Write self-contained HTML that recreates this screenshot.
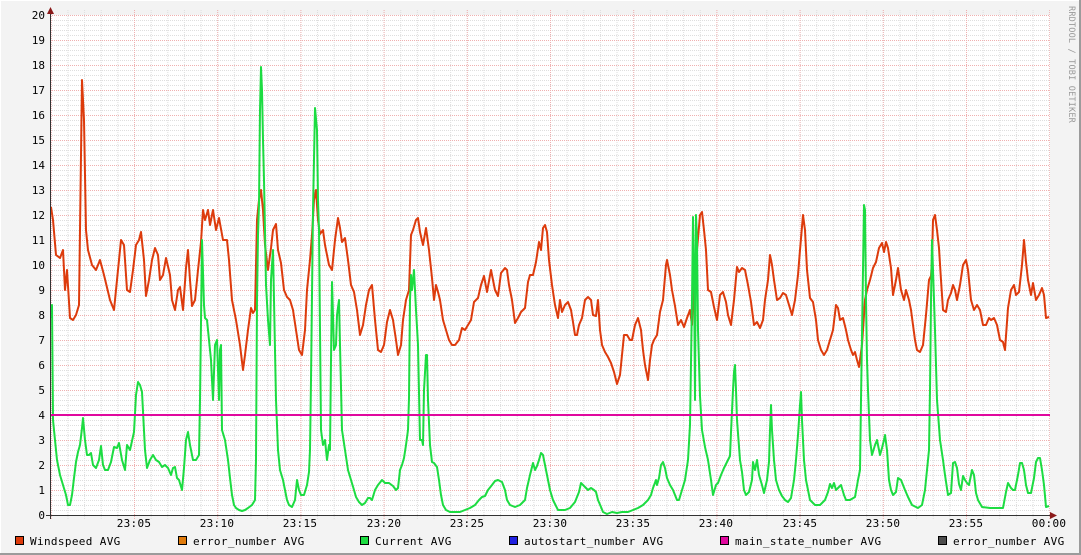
<!DOCTYPE html>
<html><head><meta charset="utf-8"><style>
html,body{margin:0;padding:0;background:#f3f3f3;}
svg{display:block;font-family:"DejaVu Sans Mono","Liberation Mono",monospace;}
</style></head><body>
<svg width="1081" height="555" viewBox="0 0 1081 555" xmlns="http://www.w3.org/2000/svg">
<defs>
<pattern id="minh" x="0" y="15" width="1000" height="5" patternUnits="userSpaceOnUse"><line x1="0" y1="0.5" x2="1000" y2="0.5" stroke="#dedede" stroke-width="1" stroke-dasharray="1,1"/></pattern>
<pattern id="minv" x="50.8" y="0" width="16.64" height="600" patternUnits="userSpaceOnUse"><line x1="0.5" y1="0" x2="0.5" y2="600" stroke="#dedede" stroke-width="1" stroke-dasharray="1,1"/></pattern>
<pattern id="majh" x="0" y="15" width="1000" height="25" patternUnits="userSpaceOnUse"><line x1="0" y1="0.5" x2="1000" y2="0.5" stroke="#efb0b0" stroke-width="1" stroke-dasharray="1,1"/></pattern>
<pattern id="majv" x="50.8" y="0" width="83.2" height="600" patternUnits="userSpaceOnUse"><line x1="0.5" y1="0" x2="0.5" y2="600" stroke="#efb0b0" stroke-width="1" stroke-dasharray="1,1"/></pattern>
</defs>
<rect x="0" y="0" width="1081" height="555" fill="#f3f3f3"/>
<line x1="0" y1="0.5" x2="1081" y2="0.5" stroke="#fff"/>
<line x1="0.5" y1="0" x2="0.5" y2="555" stroke="#fff"/>
<rect x="1079" y="0" width="2" height="555" fill="#9b9b9b"/>
<rect x="0" y="553" width="1081" height="2" fill="#9b9b9b"/>
<rect x="51" y="15" width="999" height="500" fill="#fff"/>
<rect x="51" y="15" width="999" height="500" fill="url(#minh)"/>
<rect x="51" y="10" width="999" height="509" fill="url(#minv)"/>
<rect x="51" y="15" width="999" height="500" fill="url(#majh)"/>
<rect x="51" y="10" width="999" height="509" fill="url(#majv)"/>
<g font-size="11" fill="#000" text-anchor="end">
<text x="45" y="19">20</text><text x="45" y="44">19</text><text x="45" y="69">18</text><text x="45" y="94">17</text><text x="45" y="119">16</text><text x="45" y="144">15</text><text x="45" y="169">14</text><text x="45" y="194">13</text><text x="45" y="219">12</text><text x="45" y="244">11</text><text x="45" y="269">10</text><text x="45" y="294">9</text><text x="45" y="319">8</text><text x="45" y="344">7</text><text x="45" y="369">6</text><text x="45" y="394">5</text><text x="45" y="419">4</text><text x="45" y="444">3</text><text x="45" y="469">2</text><text x="45" y="494">1</text><text x="45" y="519">0</text>
</g>
<g font-size="11" fill="#000" text-anchor="middle" letter-spacing="0.3">
<text x="134" y="527">23:05</text><text x="217" y="527">23:10</text><text x="300" y="527">23:15</text><text x="384" y="527">23:20</text><text x="467" y="527">23:25</text><text x="550" y="527">23:30</text><text x="633" y="527">23:35</text><text x="716" y="527">23:40</text><text x="800" y="527">23:45</text><text x="883" y="527">23:50</text><text x="966" y="527">23:55</text><text x="1049" y="527">00:00</text>
</g>
<polyline fill="none" stroke="#dd3b0c" stroke-width="2" stroke-linejoin="round" points="51,207 53,220 56,255 60,258 63,250 65,290 67,270 70,318 73,320 76,315 79,305 82,80 84,120 86,230 88,250 92,265 96,270 100,260 104,275 110,300 114,310 117,280 121,240 124,245 127,290 130,292 133,270 136,245 139,240 141,232 144,260 146,296 149,280 152,260 155,248 158,255 160,280 163,275 166,258 170,275 172,300 175,310 178,290 180,287 183,310 186,268 188,250 190,280 192,306 195,300 198,270 201,242 203,210 205,220 208,210 210,225 213,210 216,230 219,218 223,240 227,240 229,260 232,300 236,320 240,345 243,370 245,355 248,330 251,308 253,313 255,310 257,220 259,200 261,190 263,210 265,245 268,270 271,248 273,230 276,224 278,250 281,263 284,290 287,297 290,300 293,310 296,330 299,350 302,355 305,330 307,290 310,260 312,235 314,200 316,190 318,220 320,234 323,230 325,245 329,265 332,270 335,240 338,218 340,228 342,242 345,238 348,260 351,285 354,292 357,310 360,335 363,325 366,305 369,290 372,285 375,320 378,350 381,352 384,345 387,322 390,310 393,320 396,340 398,355 401,345 403,320 406,300 409,290 411,235 413,230 416,220 418,218 420,232 423,245 426,228 429,250 432,278 434,300 436,285 438,292 440,300 443,320 446,330 449,340 452,345 455,345 459,340 462,328 465,330 468,325 471,320 474,302 478,298 481,285 484,276 487,292 491,270 495,290 498,296 501,273 505,268 507,270 509,285 512,300 515,323 518,318 521,312 525,308 528,282 530,275 533,275 536,262 539,242 541,250 543,228 545,225 547,232 549,260 552,285 555,305 558,318 560,300 562,312 565,305 568,302 571,310 573,322 575,335 577,335 579,325 582,318 585,300 588,297 591,300 593,315 596,316 598,300 600,330 602,345 605,352 608,357 611,363 614,372 617,384 620,375 622,355 624,335 627,335 630,340 632,340 635,325 638,318 641,330 643,350 645,365 648,380 650,360 652,345 654,340 657,335 660,312 663,300 666,265 667,260 670,275 672,290 675,306 678,325 681,320 684,327 687,318 690,310 692,325 694,270 697,250 700,215 702,212 704,230 706,250 708,290 711,292 714,307 717,320 720,295 723,292 726,302 728,315 731,325 734,300 736,278 737,267 739,272 742,268 745,270 748,285 751,302 754,325 757,322 760,328 763,320 765,300 768,280 770,255 772,265 774,280 777,300 780,298 783,293 786,295 789,305 792,315 795,300 798,275 800,250 803,215 805,230 807,270 810,298 813,302 816,320 818,340 821,350 824,355 827,350 830,340 833,330 836,305 838,308 840,320 843,318 846,330 848,340 851,350 853,355 855,352 857,360 859,367 862,345 865,300 867,290 870,280 873,268 876,262 879,248 882,243 884,252 886,242 888,248 891,268 893,295 896,280 898,268 901,290 904,300 906,290 909,300 911,310 913,325 915,340 917,350 920,352 923,345 926,315 929,280 931,276 932,260 933,220 935,215 937,230 939,248 941,280 943,310 946,312 948,300 951,293 953,285 955,290 957,300 960,285 963,265 966,260 968,270 971,300 974,310 977,305 980,310 983,325 986,325 989,318 991,320 994,318 997,325 1000,340 1003,342 1005,350 1008,308 1011,290 1014,285 1016,295 1019,292 1022,265 1024,240 1026,262 1028,280 1031,295 1033,283 1036,300 1039,295 1042,288 1044,295 1046,318 1049,317"/>
<polyline fill="none" stroke="#1cdc41" stroke-width="2" stroke-linejoin="round" points="51,318 52,305 53,420 55,440 57,460 60,475 63,485 66,495 68,505 70,505 72,495 74,478 76,462 78,452 80,445 82,428 83,418 85,440 87,455 89,455 91,453 93,465 96,468 99,460 101,446 103,465 105,470 108,470 111,462 114,447 117,448 119,443 122,460 125,470 127,445 130,450 134,432 136,395 138,382 140,385 142,392 145,450 147,468 150,460 153,455 156,460 159,462 162,467 165,465 168,468 171,475 173,468 175,467 177,478 179,480 182,490 184,468 186,440 188,432 190,445 193,460 196,460 199,455 200,400 201,322 202,240 204,305 205,318 207,320 209,340 211,360 213,400 215,345 217,340 219,400 220,350 221,345 222,430 225,440 228,460 230,478 232,495 234,505 236,508 239,510 242,511 245,510 248,508 252,505 255,500 256,460 257,300 258,235 259,205 260,110 261,67 262,90 263,140 264,180 265,230 266,285 268,320 270,345 271,280 273,250 274,300 276,400 278,450 280,470 283,480 285,490 287,500 289,505 292,507 295,500 297,480 299,490 301,495 304,495 307,485 309,472 310,450 311,380 313,210 315,108 317,130 318,200 319,230 321,430 323,445 325,440 327,460 329,445 330,450 331,360 332,282 334,350 336,345 337,315 339,300 340,345 342,430 345,450 348,470 351,480 354,490 356,497 359,502 362,505 365,503 368,498 370,498 372,500 375,490 378,485 382,480 385,483 389,483 393,486 396,490 398,488 400,470 402,465 404,458 406,445 408,430 409,398 410,300 411,275 412,290 414,270 416,310 418,345 420,440 422,440 423,445 424,390 426,355 427,355 428,400 430,445 432,462 434,463 437,467 439,480 441,495 443,505 446,510 450,512 455,512 460,512 465,510 470,508 475,505 479,500 482,497 485,496 488,490 492,485 495,481 498,480 502,482 505,490 507,500 510,505 515,507 520,505 525,500 527,488 530,475 533,463 535,470 537,466 539,460 541,453 543,455 545,465 547,475 550,490 553,500 558,510 565,510 570,508 575,502 579,492 581,483 584,486 588,490 591,488 594,490 596,492 598,500 601,507 603,512 607,514 612,512 617,513 622,512 628,512 633,510 638,508 643,505 648,500 651,495 653,488 656,480 657,485 659,478 661,465 663,462 665,468 667,478 670,485 673,490 675,495 677,500 679,500 682,490 685,480 688,460 690,425 692,300 693,217 694,265 695,400 696,215 697,240 698,330 700,396 702,430 705,447 708,460 711,480 713,495 716,485 718,483 721,475 724,468 727,462 730,456 731,432 733,390 734,372 735,365 736,390 737,420 740,460 742,472 744,490 746,495 749,492 752,480 753,462 755,470 757,460 759,475 762,485 764,493 767,480 769,462 770,430 771,405 772,430 774,460 776,480 779,490 782,496 785,500 788,502 791,498 794,480 796,460 798,435 800,405 801,392 802,420 804,460 806,480 808,490 810,500 815,505 820,505 825,500 828,492 830,484 832,488 834,483 836,490 838,488 841,485 844,495 846,500 850,500 855,497 858,480 860,470 861,400 863,270 864,205 865,210 866,300 867,360 868,390 870,440 872,455 875,445 877,440 880,455 882,448 884,440 885,435 887,450 889,480 891,490 893,495 896,492 898,478 901,480 905,490 908,497 912,505 918,508 922,505 925,490 927,470 929,450 930,390 931,300 932,240 933,270 935,330 937,400 940,440 943,460 945,475 948,495 951,493 953,463 955,462 957,468 959,484 961,490 963,476 965,480 967,483 969,485 972,470 974,475 976,493 978,500 982,507 990,508 998,508 1003,508 1006,492 1008,483 1011,488 1013,490 1015,490 1018,475 1020,463 1022,463 1024,470 1026,485 1028,493 1031,493 1034,478 1036,462 1038,458 1040,458 1042,470 1044,485 1046,507 1049,506"/>
<line x1="51" y1="415" x2="1050" y2="415" stroke="#e0089e" stroke-width="2"/>
<line x1="46" y1="515.5" x2="1052" y2="515.5" stroke="#333"/>
<line x1="50.5" y1="10" x2="50.5" y2="519" stroke="#333"/>
<polygon points="1050,512 1057,515.5 1050,519" fill="#8b1a1a"/>
<polygon points="47,14 50.5,7 54,14" fill="#8b1a1a"/>
<text transform="translate(1069,6) rotate(90)" font-size="8.5" fill="#999" letter-spacing="0.2">RRDTOOL / TOBI OETIKER</text>
<g font-size="11" fill="#000" letter-spacing="0.35">
<rect x="15.5" y="536.5" width="8" height="8" fill="#dd3b0c" stroke="#000"/><text x="30" y="545">Windspeed AVG</text>
<rect x="178.5" y="536.5" width="8" height="8" fill="#e07b0c" stroke="#000"/><text x="193" y="545">error_number AVG</text>
<rect x="360.5" y="536.5" width="8" height="8" fill="#1cdc41" stroke="#000"/><text x="375" y="545">Current AVG</text>
<rect x="509.5" y="536.5" width="8" height="8" fill="#2020e0" stroke="#000"/><text x="524" y="545">autostart_number AVG</text>
<rect x="720.5" y="536.5" width="8" height="8" fill="#e0089e" stroke="#000"/><text x="735" y="545">main_state_number AVG</text>
<rect x="938.5" y="536.5" width="8" height="8" fill="#4d4d4d" stroke="#000"/><text x="953" y="545">error_number AVG</text>
</g>
</svg>
</body></html>
